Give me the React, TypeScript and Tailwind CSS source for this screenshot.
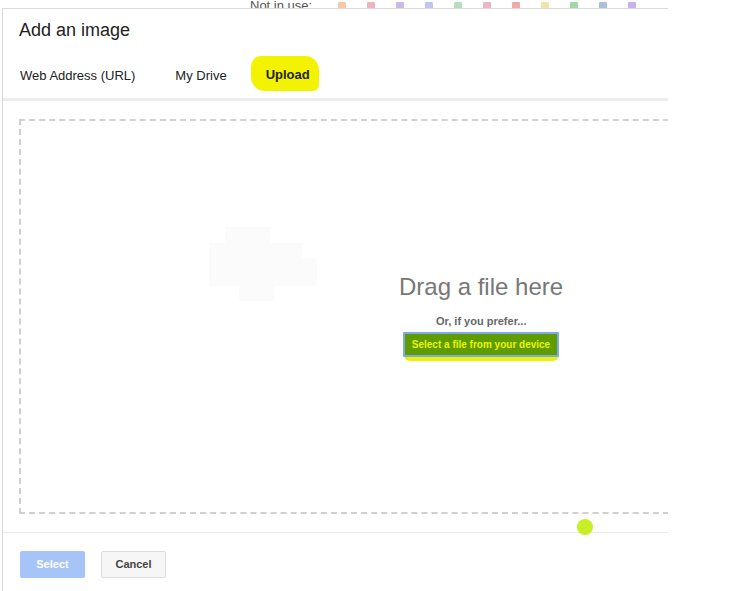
import React from "react";

export default function App() {
  const swatches = ["#f3c9a8", "#efb3c0", "#c9b8e6", "#c3c4ee", "#b7dcc0", "#eab5c6", "#f0a9a9", "#efe6a3", "#9fd8a4", "#a9bfdc", "#c7b3e8"];
  return (
    <div className="w-[733px] h-[591px] bg-white overflow-hidden relative" style={{ fontFamily: '"Liberation Sans", Arial, sans-serif' }}>
      {/* top strip (page behind the dialog) */}
      <div className="h-[8px] overflow-hidden flex items-end">
        <div className="flex items-center ml-[250px] -mb-[5px]">
          <span className="text-[13px] leading-[14px] text-[#555] w-[88px]">Not in use:</span>
          {swatches.map((c, i) => (
            <span key={i} className="w-[8px] h-[8px] rounded-[1px] mr-[21px]" style={{ backgroundColor: c }} />
          ))}
        </div>
      </div>

      {/* dialog */}
      <div className="ml-[2px] w-[666px] h-[583px] border-l border-t border-[#d9d9d9] flex flex-col overflow-hidden">
        <div className="pl-[16px] pt-[9px] h-[40px]">
          <h1 className="text-[18px] leading-[24px] text-[#222]">Add an image</h1>
        </div>

        {/* tabs */}
        <div className="relative h-[52px] flex items-center pl-[17px] pt-[4px] border-b-[3px] border-[#ececec]">
          <span className="text-[13px] text-[#222]">Web Address (URL)</span>
          <span className="text-[13px] text-[#222] ml-[40px]">My Drive</span>
          <span className="relative ml-[24px] w-[68px] h-[35px] flex items-center -mt-[4px]">
            <span className="absolute inset-0 bg-[#f3f300] rounded-[10px_14px_6px_14px]" />
            <span className="relative text-[13px] font-bold text-[#222] ml-[15px] mt-[3px]">Upload</span>
          </span>
        </div>

        {/* drop zone */}
        <div className="pl-[16px] pt-[18px] h-[431px]">
          <div className="relative w-[660px] h-[395px] border-2 border-dashed border-[#d0d0d0] flex flex-col pt-[151px] pl-[378px]">
            {/* faint cloud */}
            <svg className="absolute left-[188px] top-[102px]" width="115" height="85" viewBox="0 0 115 85">
              <path d="M16 4 h45 v16 h32 v15 h15 v28 H65 v15 H30 v-15 H0 V20 h16 Z" fill="#fbfbfb" />
            </svg>
            <p className="text-[24px] leading-[30px] text-[#777]">Drag a file here</p>
            <p className="mt-[11px] ml-[37px] text-[11px] font-bold text-[#666]">Or, if you prefer...</p>
            <div className="relative mt-[1px] ml-[4px] w-[156px]">
              <span className="absolute left-[1px] right-[0px] top-[20px] h-[10px] bg-[#eef000] rounded-b-[6px]" />
              <button className="relative w-[156px] h-[25px] bg-[#5e9c00] border-2 border-[#7ea9ec] text-[10px] font-bold text-[#e9f400] rounded-[1px]">
                Select a file from your device
              </button>
            </div>
          </div>
        </div>

        {/* footer */}
        <div className="border-t border-[#e8e8e8] pl-[17px] pt-[18px] flex gap-[16px]">
          <button className="w-[65px] h-[27px] bg-[#a6c4f7] rounded-[2px] text-[11px] font-bold text-white">Select</button>
          <button className="w-[65px] h-[27px] bg-[#f6f6f6] border border-[#dcdcdc] rounded-[2px] text-[11px] font-bold text-[#444]">Cancel</button>
        </div>
      </div>

      {/* green dot */}
      <span className="absolute left-[577px] top-[519px] w-[16px] h-[16px] rounded-full bg-[#c8ee26]" />
    </div>
  );
}
